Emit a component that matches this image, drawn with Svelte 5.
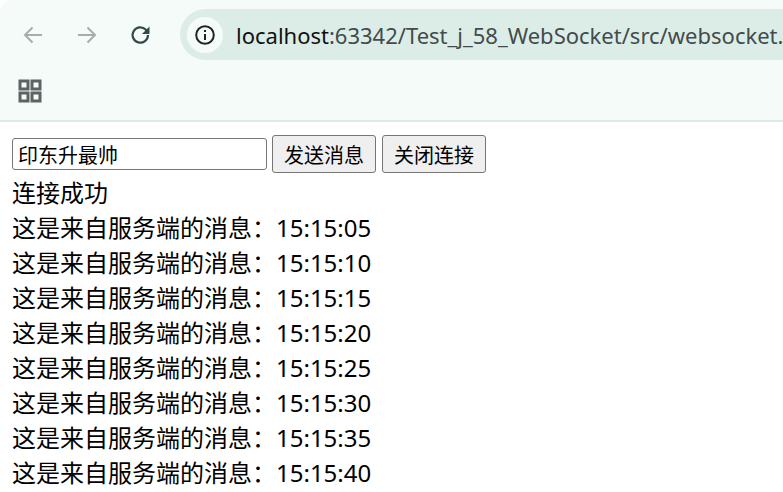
<script lang="ts">
  const times = ["15:15:05", "15:15:10", "15:15:15", "15:15:20", "15:15:25", "15:15:30", "15:15:35", "15:15:40"];
</script>

<div class="window">
  <header class="chrome">
    <div class="toolbar">
      <button class="nav" aria-label="Back">
        <svg width="24" height="24" viewBox="0 0 24 24"><path d="M21 12H4M11.5 4.5 4 12l7.5 7.5" class="arrow" /></svg>
      </button>
      <button class="nav" aria-label="Forward">
        <svg width="24" height="24" viewBox="0 0 24 24"><path d="M3 12h17M12.500 4.500 20 12l-7.500 7.500" class="arrow" /></svg>
      </button>
      <button class="nav" aria-label="Reload">
        <svg width="24" height="24" viewBox="0 0 24 24">
          <path d="M19 12a7.700 7.700 0 1 1-2.300-5.500L19 9" class="reload" />
          <path d="M20.500 3.500v7.500H13z" fill="#33494a" />
        </svg>
      </button>
      <div class="omnibox">
        <span class="site-info">
          <svg width="22" height="22" viewBox="0 0 22 22">
            <circle cx="11" cy="11" r="8.800" fill="none" stroke="#1d2424" stroke-width="2" />
            <path d="M10 10h2v6h-2zM10 6h2v2h-2z" fill="#1d2424" />
          </svg>
        </span>
        <span class="url"><b>localhost</b>:63342/Test_j_58_WebSocket/src/websocket.html</span>
      </div>
    </div>
    <div class="bookmarks">
      <svg width="24" height="24" viewBox="0 0 24 24" class="apps">
        <path d="M2 2h8v8H2zM14 2h8v8h-8zM2 14h8v8H2zM14 14h8v8h-8z" />
      </svg>
    </div>
  </header>

  <main class="page">
    <div class="form">
      <input type="text" value="印东升最帅" />
      <button class="btn">发送消息</button>
      <button class="btn">关闭连接</button>
    </div>
    <div class="log">
      <div>连接成功</div>
      {#each times as t}
        <div>这是来自服务端的消息：{t}</div>
      {/each}
    </div>
  </main>
</div>

<style>
  :global(body) {
    background: #fff;
    overflow: hidden;
  }
  .window {
    width: 783px;
    height: 492px;
    overflow: hidden;
    font-family: "Noto Sans", "Noto Sans CJK SC", sans-serif;
  }
  .chrome {
    height: 120px;
    background: #f5fbf9;
    border-bottom: 2px solid #dcebe7;
    border-top-left-radius: 12px;
  }
  .toolbar {
    display: flex;
    align-items: center;
    height: 51px;
    padding: 9px 0 0 21px;
  }
  .nav {
    width: 24px;
    height: 24px;
    padding: 0;
    margin-right: 30px;
    border: none;
    background: none;
  }
  .nav:nth-child(3) {
    margin-right: 27px;
  }
  .arrow {
    fill: none;
    stroke: #a8adac;
    stroke-width: 2;
  }
  .reload {
    fill: none;
    stroke: #33494a;
    stroke-width: 2.200;
  }
  .omnibox {
    flex: 1;
    display: flex;
    align-items: center;
    height: 51px;
    padding-left: 7px;
    background: #dcede8;
    border-radius: 26px 0 0 26px;
    overflow: hidden;
    white-space: nowrap;
  }
  .site-info {
    flex: none;
    display: flex;
    align-items: center;
    justify-content: center;
    width: 36px;
    height: 36px;
    border-radius: 50%;
    background: #f5fbf9;
    margin-right: 13px;
  }
  .url {
    font-size: 22px;
    color: #434b4b;
  }
  .url b {
    font-weight: 400;
    color: #111;
  }
  .bookmarks {
    display: flex;
    padding: 19px 0 0 18px;
  }
  .apps {
    fill: none;
    stroke: #5c6363;
    stroke-width: 3;
  }
  .page {
    padding: 13px 0 0 12px;
    color: #000;
  }
  .form {
    display: flex;
    align-items: center;
    gap: 5px;
    height: 38px;
  }
  input {
    box-sizing: border-box;
    width: 255px;
    height: 32px;
    margin: 0;
    padding: 0 5px;
    font: inherit;
    font-size: 20px;
    line-height: 28px;
    color: #000;
    background: #fff;
    border: 1px solid #767676;
    border-radius: 3px;
    outline: none;
  }
  .btn {
    box-sizing: border-box;
    width: 104px;
    height: 38px;
    margin: 0;
    padding: 0;
    font: inherit;
    font-size: 20px;
    color: #000;
    background: #efefef;
    border: 1px solid #767676;
    border-radius: 3px;
  }
  .btn + .btn {
    margin-left: 1px;
  }
  .log {
    font-size: 24px;
    line-height: 35px;
    white-space: nowrap;
    margin-top: 2px;
  }
</style>
